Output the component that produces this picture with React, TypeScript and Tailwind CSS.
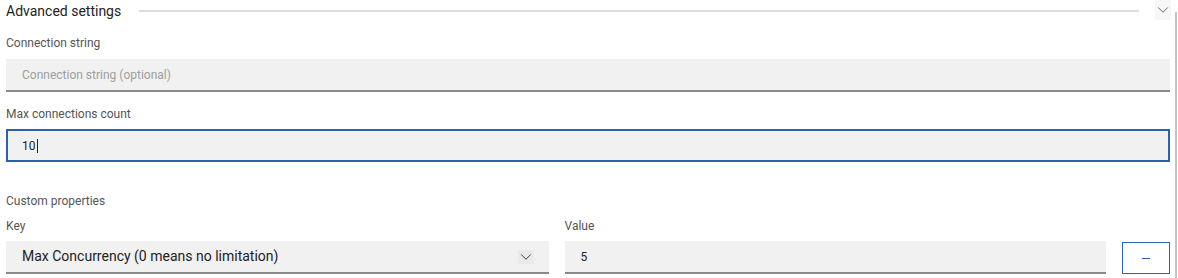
import { ChevronDown } from 'lucide-react';

function Label({ children }: { children: React.ReactNode }) {
  return <div className="text-[12px] leading-[15px] text-[#555]">{children}</div>;
}

export default function App() {
  return (
    <div className="w-[1178px] h-[278px] bg-white overflow-hidden font-['Roboto',sans-serif] flex">
      <div className="w-[1175px] pl-[6px] pr-[5px]">
        {/* Section header */}
        <div className="flex items-center h-[22px]">
          <span className="text-[14px] leading-[20px] text-[#222]">Advanced settings</span>
          <div className="flex-1 h-[2px] bg-[#dcdcdc] ml-[18px] mr-[16px]" />
          <div className="w-[16px] h-[20px] bg-[#f7f7f7] flex items-center justify-center overflow-visible -mt-[2px] -mr-[1px]">
            <ChevronDown className="w-[18px] h-[18px] shrink-0 text-[#555]" strokeWidth={1.2} />
          </div>
        </div>

        {/* Connection string */}
        <div className="mt-[14px]">
          <Label>Connection string</Label>
        </div>
        <div className="mt-[8px] h-[33px] bg-[#f1f1f1] border-b-2 border-[#8a8a8a] flex items-center pl-[16px]">
          <span className="text-[12px] text-[#9e9e9e]">Connection string (optional)</span>
        </div>

        {/* Max connections */}
        <div className="mt-[15px]">
          <Label>Max connections count</Label>
        </div>
        <div className="mt-[7px] h-[33px] bg-[#f1f1f1] border-2 border-[#2c62ad] flex items-center pl-[14px]">
          <span className="text-[12px] text-[#222]">10</span>
          <span className="w-[1px] h-[14px] bg-[#222] ml-[1px]" />
        </div>

        {/* Custom properties */}
        <div className="mt-[32px]">
          <Label>Custom properties</Label>
        </div>
        <div className="mt-[10px] flex items-end gap-[16px]">
          <div className="w-[543px]">
            <Label>Key</Label>
            <div className="mt-[7px] h-[33px] bg-[#f1f1f1] border-b-2 border-[#8a8a8a] flex items-center pl-[16px] pr-[15px]">
              <span className="flex-1 text-[14px] text-[#222]">Max Concurrency (0 means no limitation)</span>
              <div className="w-[16px] h-[14px] bg-[#eaeaea] flex items-center justify-center overflow-visible">
                <ChevronDown className="w-[18px] h-[18px] shrink-0 text-[#333]" strokeWidth={1.3} />
              </div>
            </div>
          </div>
          <div className="w-[542px]">
            <Label>Value</Label>
            <div className="mt-[7px] h-[33px] bg-[#f1f1f1] border-b-2 border-[#8a8a8a] flex items-center pl-[16px]">
              <span className="text-[12px] text-[#222]">5</span>
            </div>
          </div>
          <button className="w-[48px] h-[32px] border border-[#2c62ad] bg-white flex items-center justify-center">
            <span className="w-[8px] h-[1px] bg-[#2c62ad]" />
          </button>
        </div>
      </div>
      <div className="mt-[12px] w-[2px] bg-[#c4c4c4]" />
    </div>
  );
}
